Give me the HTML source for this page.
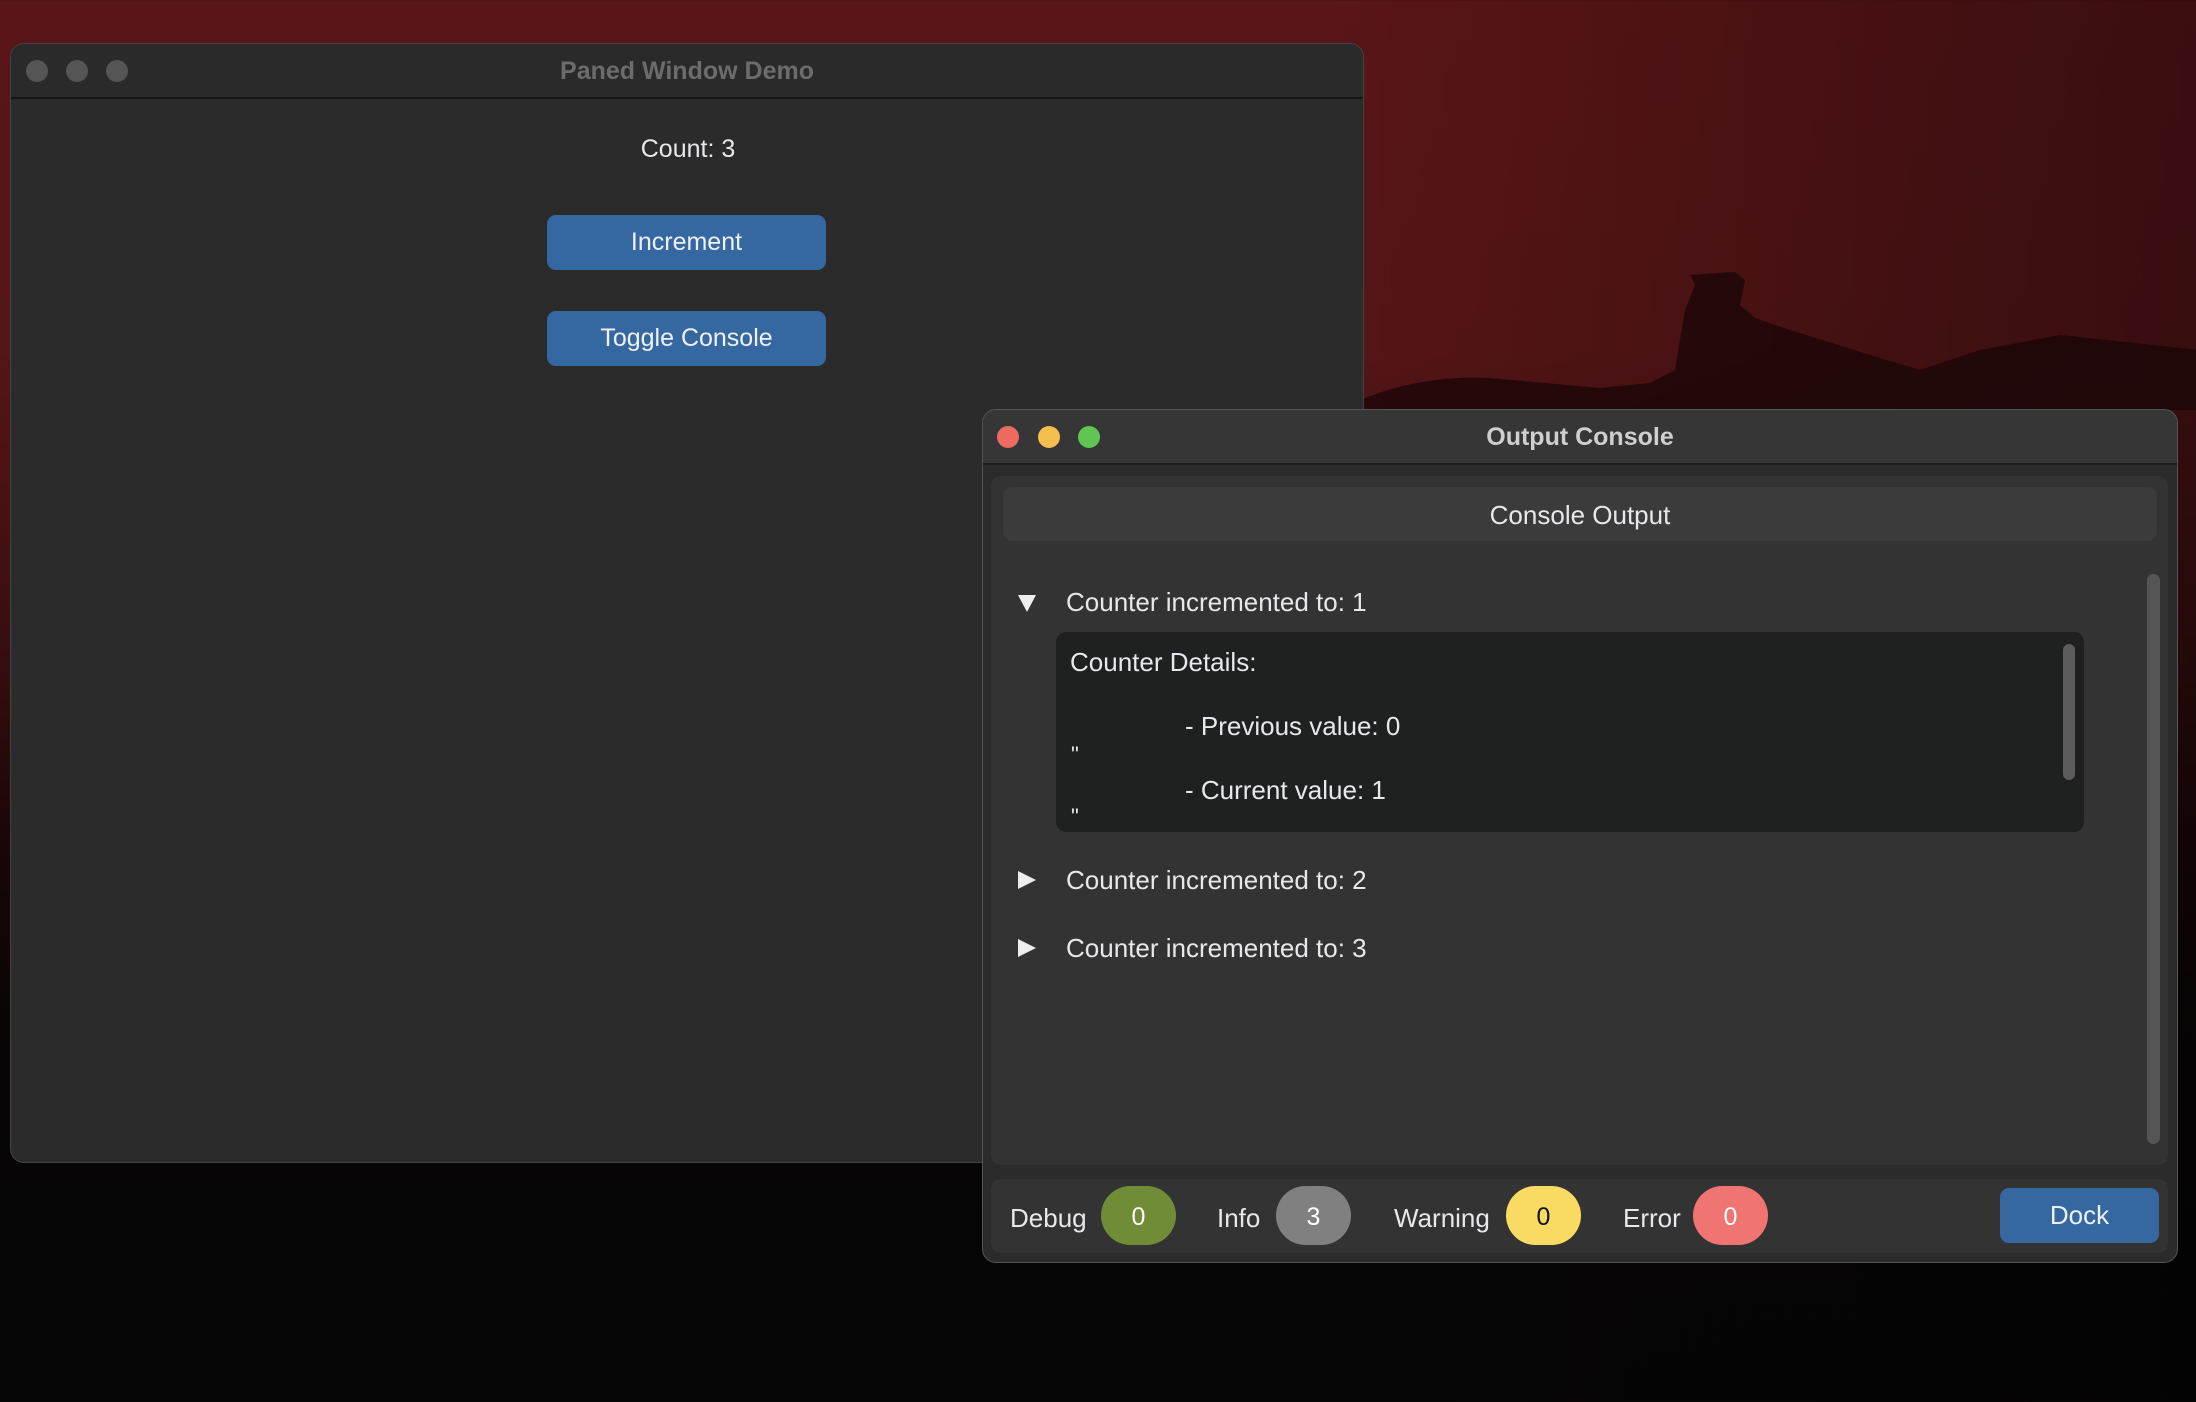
<!DOCTYPE html>
<html><head><meta charset="utf-8"><style>
*{margin:0;padding:0;box-sizing:border-box}
body{width:2196px;height:1402px;overflow:hidden;position:relative;font-family:"Liberation Sans",sans-serif;color:#e8e8ec;
background:linear-gradient(180deg,#5a1518 0%,#561517 25%,#3a0e10 45%,#1a0607 60%,#070505 75%,#060505 100%);}
.bgr{position:absolute;left:0;top:0;width:2196px;height:1402px;background:linear-gradient(90deg,rgba(0,0,0,0) 0%,rgba(0,0,0,0) 60%,rgba(0,0,0,0.35) 100%)}
.abs{position:absolute}
.win1{left:10px;top:43px;width:1354px;height:1120px;background:#2b2b2b;border-radius:14px;border:1px solid #444;overflow:hidden}
.t1{height:55px;background:#2a2a2a;border-bottom:2px solid #161616;position:relative}
.dot{position:absolute;width:22px;height:22px;border-radius:50%;top:16px}
.tt{position:absolute;width:100%;text-align:center;top:13px;font-size:25px;font-weight:bold}
.btn{position:absolute;background:#3568a0;border-radius:9px;color:#f0f0f4;text-align:center;font-size:25px}
.win2{left:982px;top:409px;width:1196px;height:854px;background:#2b2b2b;border-radius:14px;border:1px solid #555;overflow:hidden}
.t2{height:55px;background:#363636;border-bottom:2px solid #1c1c1c;position:relative}
.row{position:absolute;font-size:26px;white-space:nowrap}
.pill{position:absolute;top:1186px;width:75px;height:59px;border-radius:30px;text-align:center;line-height:63px;font-size:25px}
.lbl{position:absolute;top:1203px;font-size:26px}
</style></head><body>
<div class="bgr"></div>
<svg class="abs" style="left:1360px;top:240px" width="840" height="170">
<path d="M0 160 Q60 135 130 138 L240 148 L290 143 L315 130 L325 70 L335 45 L330 35 L375 32 L385 40 L380 65 L395 78 L430 90 L520 118 L560 130 L620 110 L700 95 L840 110 L840 170 L0 170Z" fill="#1a0607" opacity="0.75"/>
</svg>
<div class="abs win1">
 <div class="t1">
  <div class="dot" style="left:15px;background:#555"></div>
  <div class="dot" style="left:55px;background:#555"></div>
  <div class="dot" style="left:95px;background:#555"></div>
  <div class="tt" style="color:#6c6c6c">Paned Window Demo</div>
 </div>
 <div class="abs" style="left:0;width:1354px;top:91px;text-align:center;font-size:25px">Count: 3</div>
 <div class="btn" style="left:536px;top:171px;width:279px;height:55px;line-height:55px">Increment</div>
 <div class="btn" style="left:536px;top:267px;width:279px;height:55px;line-height:55px">Toggle Console</div>
</div>
<div class="abs win2">
 <div class="t2">
  <div class="dot" style="left:14px;background:#ec6a5e"></div>
  <div class="dot" style="left:55px;background:#f4bf4f"></div>
  <div class="dot" style="left:95px;background:#61c554"></div>
  <div class="tt" style="color:#cfcfcf">Output Console</div>
 </div>
</div>
<div class="abs" style="left:991px;top:476px;width:1177px;height:689px;background:#333;border-radius:10px"></div>
<div class="abs" style="left:1003px;top:487px;width:1154px;height:54px;background:#3b3b3b;border-radius:9px;text-align:center;line-height:56px;font-size:26px">Console Output</div>
<svg class="abs" style="left:1016px;top:592px" width="22" height="22"><path d="M2 3 L20 3 L11 20Z" fill="#eee"/></svg>
<div class="row" style="left:1066px;top:587px">Counter incremented to: 1</div>
<div class="abs" style="left:1056px;top:632px;width:1028px;height:200px;background:#1f2020;border-radius:10px"></div>
<div class="row" style="left:1070px;top:647px">Counter Details:</div>
<div class="row" style="left:1185px;top:711px">- Previous value: 0</div>
<div class="row" style="left:1071px;top:742px;font-size:22px">"</div>
<div class="row" style="left:1185px;top:775px">- Current value: 1</div>
<div class="row" style="left:1071px;top:804px;font-size:22px">"</div>
<div class="abs" style="left:2063px;top:644px;width:12px;height:136px;background:#5c5c5c;border-radius:6px"></div>
<svg class="abs" style="left:1016px;top:869px" width="22" height="22"><path d="M2 2 L20 11 L2 20Z" fill="#eee"/></svg>
<div class="row" style="left:1066px;top:865px">Counter incremented to: 2</div>
<svg class="abs" style="left:1016px;top:937px" width="22" height="22"><path d="M2 2 L20 11 L2 20Z" fill="#eee"/></svg>
<div class="row" style="left:1066px;top:933px">Counter incremented to: 3</div>
<div class="abs" style="left:2147px;top:574px;width:13px;height:570px;background:#555;border-radius:7px"></div>
<div class="abs" style="left:991px;top:1179px;width:1177px;height:74px;background:#333;border-radius:10px"></div>
<div class="lbl" style="left:1010px">Debug</div>
<div class="pill" style="left:1101px;background:#718c37;color:#fff">0</div>
<div class="lbl" style="left:1217px">Info</div>
<div class="pill" style="left:1276px;background:#808080;color:#fff">3</div>
<div class="lbl" style="left:1394px">Warning</div>
<div class="pill" style="left:1506px;background:#f9da63;color:#111">0</div>
<div class="lbl" style="left:1623px">Error</div>
<div class="pill" style="left:1693px;background:#ef7472;color:#fff">0</div>
<div class="btn" style="left:2000px;top:1188px;width:159px;height:55px;line-height:55px;font-size:26px">Dock</div>
</body></html>
